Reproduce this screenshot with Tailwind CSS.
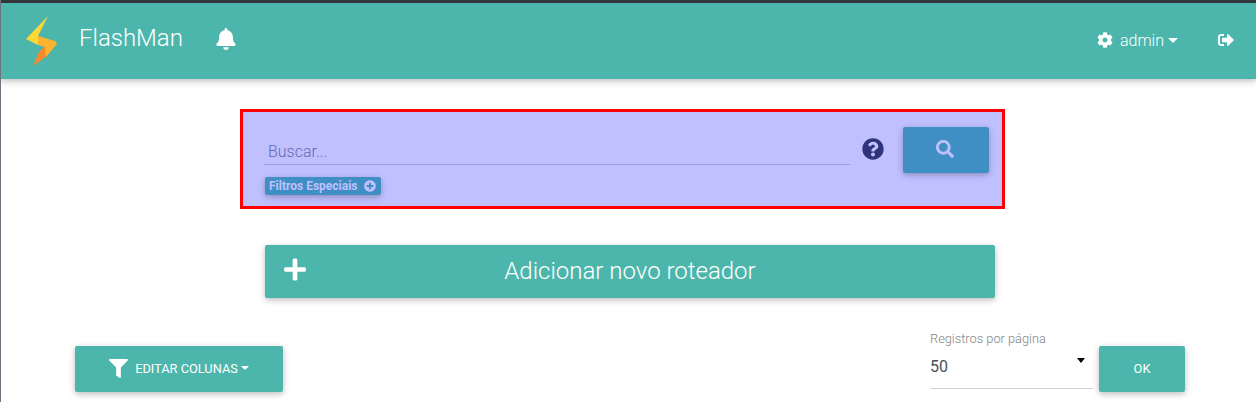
<!DOCTYPE html>
<html lang="en">
<head>
    <meta charset="UTF-8" />
    <meta name="viewport" content="width=device-width, initial-scale=1.0" />
    <title>FlashMan</title>
    <script src="https://cdn.jsdelivr.net/npm/@tailwindcss/browser@4"></script>
</head>
<body class="relative h-[402px] overflow-hidden bg-white font-['Roboto',sans-serif]">
    <div class="absolute inset-y-0 left-0 z-20 w-px bg-[#6c757d]"></div>
    <div class="h-[3px] bg-[#343a40]"></div>

    <!-- Navbar -->
    <nav class="relative z-10 flex h-[76px] items-center bg-[#4db6ac] text-white shadow-[0_2px_5px_rgba(0,0,0,0.16),0_2px_10px_rgba(0,0,0,0.12)]">
        <svg class="ml-[26px] h-[50px] w-[32px]" viewBox="0 0 32 50">
            <path d="M22 0 L0 23 L12 29 L12 20 Z" fill="#fdd835"/>
            <path d="M19 30 L21 40 L7 50 L13 36 Z" fill="#f58a2c"/>
            <path d="M12 20 L29 25 Q32 27 30 29 L20 41 L19 31 L12 29 Z" fill="#fdb32d"/>
        </svg>
        <span class="ml-[21px] -translate-y-[3px] text-[24px] leading-none font-light">FlashMan</span>
        <svg class="ml-[33px] h-[22px] w-[20px] -translate-y-[2px]" viewBox="0 0 448 512" fill="currentColor"><path d="M224 512c35.32 0 63.97-28.65 63.97-64H160.03c0 35.35 28.65 64 63.97 64zm215.39-149.71c-19.32-20.76-55.47-51.99-55.47-154.29 0-77.7-54.48-139.9-127.94-155.16V32c0-17.67-14.32-32-31.98-32s-31.98 14.33-31.98 32v20.84C118.56 68.1 64.08 130.3 64.08 208c0 102.3-36.15 133.53-55.47 154.29-6 6.45-8.66 14.16-8.61 21.71.11 16.4 12.98 32 32.1 32h383.8c19.12 0 32-15.6 32.1-32 .05-7.55-2.61-15.27-8.61-21.71z"/></svg>

        <div class="ml-auto flex items-center">
            <svg class="ml-[1px] h-[16px] w-[16px] -translate-y-[1px]" viewBox="0 0 512 512" fill="currentColor"><path d="M487.4 315.7l-42.6-24.6c4.3-23.2 4.3-47 0-70.2l42.6-24.6c4.9-2.8 7.1-8.6 5.5-14-11.1-35.6-30-67.8-54.7-94.6-3.8-4.1-10-5.1-14.8-2.3L380.8 110c-17.9-15.4-38.5-27.3-60.8-35.1V25.8c0-5.6-3.9-10.5-9.4-11.7-36.7-8.2-74.3-7.8-109.2 0-5.5 1.2-9.4 6.1-9.4 11.7V75c-22.2 7.9-42.8 19.8-60.8 35.1L88.7 85.5c-4.9-2.8-11-1.9-14.8 2.3-24.7 26.7-43.6 58.9-54.7 94.6-1.7 5.4.6 11.2 5.5 14L67.3 221c-4.3 23.2-4.3 47 0 70.2l-42.6 24.6c-4.9 2.8-7.1 8.6-5.5 14 11.1 35.6 30 67.8 54.7 94.6 3.8 4.1 10 5.1 14.8 2.3l42.6-24.6c17.9 15.4 38.5 27.3 60.8 35.1v49.2c0 5.6 3.9 10.5 9.4 11.7 36.7 8.2 74.3 7.8 109.2 0 5.5-1.2 9.4-6.1 9.4-11.7v-49.2c22.2-7.9 42.8-19.8 60.8-35.1l42.6 24.6c4.9 2.8 11 1.9 14.8-2.3 24.7-26.7 43.6-58.9 54.7-94.6 1.5-5.5-.7-11.3-5.6-14.1zM256 336c-44.1 0-80-35.9-80-80s35.9-80 80-80 80 35.9 80 80-35.9 80-80 80z"/></svg>
            <span class="ml-[7px] text-[16px] font-light">admin</span>
            <span class="ml-[4px] h-0 w-0 -translate-y-[1px] border-x-[5px] border-t-[5px] border-x-transparent border-t-white"></span>
            <svg class="mr-[22px] ml-[40px] h-[16px] w-[16px] -translate-y-[1px]" viewBox="0 0 512 512" fill="currentColor"><path d="M497 273L329 441c-15 15-41 4.5-41-17v-96H152c-13.3 0-24-10.7-24-24v-96c0-13.3 10.7-24 24-24h136V88c0-21.4 25.9-32 41-17l168 168c9.3 9.4 9.3 24.6 0 34zM192 436v-40c0-6.6-5.4-12-12-12H96c-17.7 0-32-14.3-32-32V160c0-17.7 14.3-32 32-32h84c6.6 0 12-5.4 12-12V76c0-6.6-5.4-12-12-12H96c-53 0-96 43-96 96v192c0 53 43 96 96 96h84c6.6 0 12-5.4 12-12z"/></svg>
        </div>
    </nav>

    <!-- Search -->
    <div class="mt-[30px] ml-[240px]">
        <div class="flex h-[100px] w-[765px] items-start border-[3px] border-[#ff0000] bg-[#c0c0ff] pt-[15px] pl-[21px]">
            <div class="w-[586px]">
                <div class="flex h-[38px] items-end border-b border-[#9c9cd6] pl-[4px] text-[16px] leading-[24px] font-light text-[#6a66ad]">Buscar...</div>
                <div class="mt-[12px] ml-[1px] flex h-[18px] w-[116px] items-center rounded-[2px] bg-[#3f8fc4] pl-[4px] text-[12px] font-bold text-[#c0c0ff] shadow-[0_2px_5px_rgba(0,0,0,0.16),0_2px_10px_rgba(0,0,0,0.12)]">
                    Filtros Especiais
                    <svg class="ml-[7px] h-[12px] w-[12px]" viewBox="0 0 512 512" fill="currentColor"><path d="M256 8C119 8 8 119 8 256s111 248 248 248 248-111 248-248S393 8 256 8zm144 276c0 6.6-5.4 12-12 12h-92v92c0 6.6-5.4 12-12 12h-56c-6.6 0-12-5.4-12-12v-92h-92c-6.6 0-12-5.4-12-12v-56c0-6.6 5.4-12 12-12h92v-92c0-6.6 5.4-12 12-12h56c6.6 0 12 5.4 12 12v92h92c6.6 0 12 5.4 12 12v56z"/></svg>
                </div>
            </div>
            <svg class="mt-[11px] ml-[12px] h-[22px] w-[22px] text-[#2f337c]" viewBox="0 0 512 512" fill="currentColor"><path d="M504 256c0 136.997-111.043 248-248 248S8 392.997 8 256C8 119.083 119.043 8 256 8s248 111.083 248 248zM262.655 90c-54.497 0-89.255 22.957-116.549 63.758-3.536 5.286-2.353 12.415 2.715 16.258l34.699 26.31c5.205 3.947 12.621 3.008 16.665-2.122 17.864-22.658 30.113-35.797 57.303-35.797 20.429 0 45.698 13.148 45.698 32.958 0 14.976-12.363 22.667-32.534 33.976C247.128 238.528 216 254.941 216 296v4c0 6.627 5.373 12 12 12h56c6.627 0 12-5.373 12-12v-1.333c0-28.462 83.186-29.647 83.186-106.667 0-58.002-60.165-102-116.531-102zM256 338c-25.365 0-46 20.635-46 46 0 25.364 20.635 46 46 46s46-20.636 46-46c0-25.365-20.635-46-46-46z"/></svg>
            <button class="ml-[19px] flex h-[46px] w-[86px] items-center justify-center rounded-[2px] bg-[#3f8fc4] text-[#c0c0ff] shadow-[0_2px_5px_rgba(0,0,0,0.16),0_2px_10px_rgba(0,0,0,0.12)]">
                <svg class="h-[18px] w-[18px] -translate-x-[1px] -translate-y-[1px]" viewBox="0 0 512 512" fill="currentColor"><path d="M505 442.7L405.3 343c-4.5-4.5-10.6-7-17-7H372c27.6-35.3 44-79.7 44-128C416 93.1 322.9 0 208 0S0 93.1 0 208s93.1 208 208 208c48.3 0 92.7-16.4 128-44v16.3c0 6.4 2.5 12.5 7 17l99.7 99.7c9.4 9.4 24.6 9.4 33.9 0l28.3-28.3c9.4-9.4 9.4-24.6.1-34zM208 336c-70.7 0-128-57.2-128-128 0-70.7 57.2-128 128-128 70.7 0 128 57.2 128 128 0 70.7-57.2 128-128 128z"/></svg>
            </button>
        </div>
    </div>

    <!-- Add router -->
    <div class="mt-[36px] ml-[265px]">
        <button class="relative flex h-[53px] w-[730px] items-center justify-center rounded-[2px] bg-[#4db6ac] pb-[2px] text-[24px] font-light text-white shadow-[0_2px_5px_rgba(0,0,0,0.16),0_2px_10px_rgba(0,0,0,0.12)]">
            <svg class="absolute top-[12px] left-[19px] h-[25px] w-[22px]" viewBox="0 0 448 512" fill="currentColor"><path d="M416 208H272V64c0-17.67-14.33-32-32-32h-32c-17.67 0-32 14.33-32 32v144H32c-17.67 0-32 14.33-32 32v32c0 17.67 14.33 32 32 32h144v144c0 17.67 14.33 32 32 32h32c17.67 0 32-14.33 32-32V304h144c17.67 0 32-14.33 32-32v-32c0-17.67-14.33-32-32-32z"/></svg>
            Adicionar novo roteador
        </button>
    </div>

    <!-- Table controls -->
    <div class="mt-[32px] flex items-start justify-between pr-[71px] pl-[75px]">
        <button class="mt-[16px] flex h-[46px] w-[208px] items-center justify-center rounded-[2px] bg-[#4db6ac] text-[12.8px] font-normal text-white shadow-[0_2px_5px_rgba(0,0,0,0.16),0_2px_10px_rgba(0,0,0,0.12)]">
            <svg class="mr-[7px] h-[19px] w-[19px] -translate-y-[1px]" viewBox="0 0 512 512" fill="currentColor"><path d="M487.976 0H24.028C2.71 0-8.047 25.866 7.058 40.971L192 225.941V432c0 7.831 3.821 15.17 10.237 19.662l80 55.98C298.02 518.69 320 507.493 320 487.98V225.941l184.947-184.97C520.021 25.896 509.338 0 487.976 0z"/></svg>
            EDITAR COLUNAS
            <span class="ml-[3px] h-0 w-0 -translate-y-[1px] border-x-[4px] border-t-[4px] border-x-transparent border-t-white"></span>
        </button>
        <div class="flex items-start">
            <div class="relative h-[59px] w-[163px] border-b border-[#ced4da]">
                <div class="text-[12.8px] leading-[18px] font-light text-[#858585]">Registros por página</div>
                <div class="mt-[7px] text-[16px] leading-[24px] text-[#495057]">50</div>
                <span class="absolute top-[28px] right-[8px] h-0 w-0 border-x-[4px] border-t-[5px] border-x-transparent border-t-black"></span>
            </div>
            <button class="mt-[16px] ml-[6px] h-[46px] w-[86px] rounded-[2px] bg-[#4db6ac] text-[12.8px] font-normal text-white shadow-[0_2px_5px_rgba(0,0,0,0.16),0_2px_10px_rgba(0,0,0,0.12)]">OK</button>
        </div>
    </div>
</body>
</html>
